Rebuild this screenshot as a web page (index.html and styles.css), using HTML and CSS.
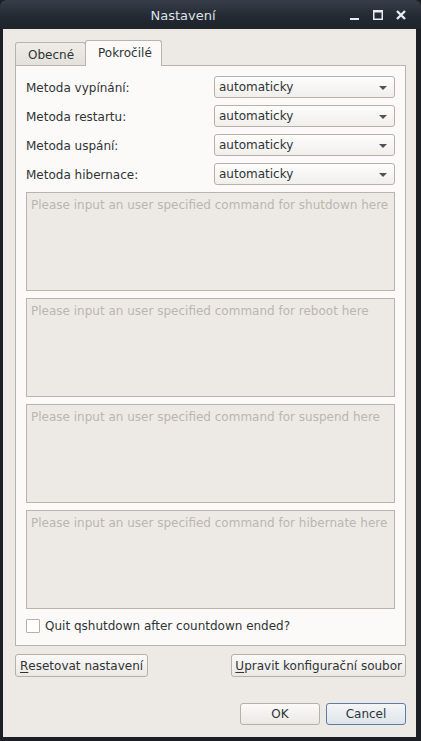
FILE: index.html
```html
<!DOCTYPE html>
<html>
<head>
<meta charset="utf-8">
<link rel="stylesheet" href="styles.css">
</head>
<body>
<div class="window">
  <div class="titlebar">
    <div class="title">Nastavení</div>
    <div class="wm-buttons">
      <svg class="wm" width="12" height="12" viewBox="0 0 12 12"><rect x="1" y="9" width="9" height="2" fill="#e8ecf0"/></svg>
      <svg class="wm" width="12" height="12" viewBox="0 0 12 12"><rect x="1.75" y="1.75" width="8.5" height="8.5" fill="none" stroke="#e8ecf0" stroke-width="1.5"/><rect x="1" y="1" width="10" height="2.5" fill="#e8ecf0"/></svg>
      <svg class="wm" width="12" height="12" viewBox="0 0 12 12"><path d="M2 2 L10 10 M10 2 L2 10" stroke="#e8ecf0" stroke-width="2.4"/></svg>
    </div>
  </div>
  <div class="content">
    <div class="tabs">
      <div class="tab">Obecné</div>
      <div class="tab active">Pokročilé</div>
    </div>
    <div class="pane">
      <div class="form">
        <div class="row"><span class="label">Metoda vypínání:</span><div class="combo"><span>automaticky</span><span class="arrow"></span></div></div>
        <div class="row"><span class="label">Metoda restartu:</span><div class="combo"><span>automaticky</span><span class="arrow"></span></div></div>
        <div class="row"><span class="label">Metoda uspání:</span><div class="combo"><span>automaticky</span><span class="arrow"></span></div></div>
        <div class="row"><span class="label">Metoda hibernace:</span><div class="combo"><span>automaticky</span><span class="arrow"></span></div></div>
      </div>
      <div class="area">Please input an user specified command for shutdown here</div>
      <div class="area">Please input an user specified command for reboot here</div>
      <div class="area">Please input an user specified command for suspend here</div>
      <div class="area">Please input an user specified command for hibernate here</div>
      <div class="check"><span class="box"></span><span>Quit qshutdown after countdown ended?</span></div>
    </div>
    <div class="actions">
      <div class="btn"><u>R</u>esetovat nastavení</div>
      <div class="btn tight"><u>U</u>pravit konfigurační soubor</div>
    </div>
    <div class="dialog-buttons">
      <div class="btn wide">OK</div>
      <div class="btn wide focus">Cancel</div>
    </div>
  </div>
</div>
</body>
</html>
```
FILE: styles.css
```css
* { box-sizing: border-box; }
html, body { margin: 0; padding: 0; background: #1b1e23; }
body { font-family: "DejaVu Sans", sans-serif; font-size: 12px; color: #2e3436; }
.window {
  width: 421px; height: 741px;
  background: #1c1f24;
  border-radius: 6px 6px 0 0;
  display: flex; flex-direction: column;
  overflow: hidden;
}
.titlebar {
  height: 29px;
  flex: none;
  background: linear-gradient(#363e4a, #232931 60%, #1f242b);
  border-radius: 6px 6px 0 0;
  position: relative;
  display: flex; align-items: center; justify-content: center;
}
.title { color: #dde2e8; font-size: 13px; margin-left: -55px; padding-top: 1px; }
.wm-buttons { position: absolute; right: 14px; top: 9px; display: flex; gap: 11px; }
.wm { display: block; }
.content {
  flex: 1;
  margin: 0 5px 4px 3px;
  background: #edeae5;
  padding: 11px 10px 12px 12px;
  display: flex; flex-direction: column;
}
.tabs { display: flex; align-items: flex-end; height: 25px; position: relative; z-index: 1; }
.tab {
  height: 23px;
  padding: 0 12px 0 12px;
  width: 71px;
  border: 1px solid #b8b3ad;
  border-bottom: none;
  border-radius: 3px 3px 0 0;
  background: linear-gradient(#efece8, #e4e1dc);
  display: flex; align-items: center;
  padding-top: 2px;
}
.tab.active {
  height: 26px;
  width: 77px;
  margin-bottom: -1px;
  margin-left: -1px;
  background: #fcfaf8;
  padding-top: 0;
  padding-bottom: 2px;
}
.pane {
  background: #fcfaf8;
  border: 1px solid #b8b3ad;
  padding: 10px 10px 12px 10px;
  display: flex; flex-direction: column; gap: 7px;
}
.form { display: flex; flex-direction: column; gap: 7px; }
.row { display: flex; align-items: center; justify-content: space-between; height: 22px; }
.label { padding-top: 1px; }
.combo {
  width: 181px; height: 22px;
  border: 1px solid #b5b0aa;
  border-radius: 3px;
  background: linear-gradient(#fdfdfc, #f1efec);
  display: flex; align-items: center; justify-content: space-between;
  padding: 0 7px 0 4px;
}
.arrow {
  width: 0; height: 0;
  border-left: 4px solid transparent;
  border-right: 4px solid transparent;
  border-top: 4px solid #505356;
  margin-top: 1px;
}
.area {
  height: 99px;
  border: 1px solid #b9b4ae;
  background: #edeae5;
  color: #bab6b0;
  padding: 5px 4px;
  line-height: 14px;
  white-space: nowrap;
  overflow: hidden;
}
.check { display: flex; align-items: center; gap: 5px; margin-top: 3px; height: 14px; }
.box { width: 14px; height: 14px; border: 1px solid #b5b0aa; background: #fff; border-radius: 1px; }
.actions { display: flex; justify-content: space-between; margin-top: 8px; }
.btn {
  height: 23px;
  border: 1px solid #b5b0aa;
  border-radius: 3px;
  background: linear-gradient(#fbfaf9, #ebe8e4);
  display: flex; align-items: center; justify-content: center;
  padding: 0 4px;
}
.btn.tight { padding: 0 3px; }
.btn u { text-decoration-thickness: 1px; text-underline-offset: 2px; }
.dialog-buttons { margin-top: auto; display: flex; justify-content: flex-end; gap: 6px; }
.btn.wide { width: 80px; height: 22px; }
.btn.focus { border-color: #5c7ea3; background: linear-gradient(#f4f6f8, #dde4ea); }
```
